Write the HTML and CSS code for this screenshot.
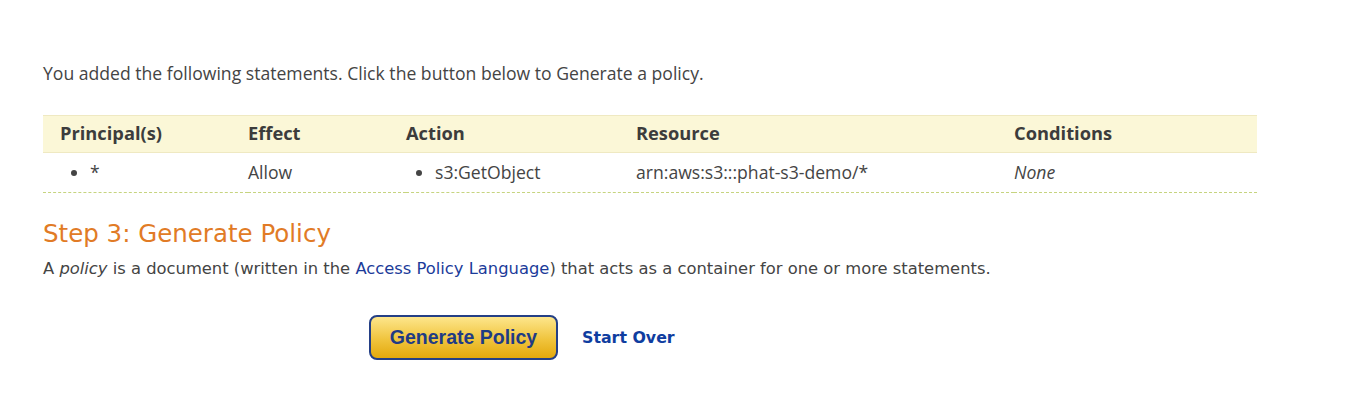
FILE: index.html
```html
<!DOCTYPE html>
<html>
<head>
<meta charset="utf-8">
<link rel="stylesheet" href="styles.css">
</head>
<body>
<div class="page">
  <p class="intro">You added the following statements. Click the button below to Generate a policy.</p>
  <table class="stmts">
    <colgroup>
      <col class="w1"><col class="w2"><col class="w3"><col class="w4"><col class="w5">
    </colgroup>
    <thead>
      <tr>
        <th class="first">Principal(s)</th>
        <th>Effect</th>
        <th>Action</th>
        <th>Resource</th>
        <th>Conditions</th>
      </tr>
    </thead>
    <tbody>
      <tr>
        <td class="first"><ul class="list l1"><li>*</li></ul></td>
        <td>Allow</td>
        <td><ul class="list l3"><li>s3:GetObject</li></ul></td>
        <td>arn:aws:s3:::phat-s3-demo/*</td>
        <td><em>None</em></td>
      </tr>
    </tbody>
  </table>
  <h2 class="step">Step 3: Generate Policy</h2>
  <p class="desc">A <em>policy</em> is a document (written in the <a href="#" class="link">Access Policy Language</a>) that acts as a container for one or more statements.</p>
  <div class="actions">
    <button class="gen-btn">Generate Policy</button>
    <a href="#" class="start-over">Start Over</a>
  </div>
</div>
</body>
</html>
```

FILE: styles.css
```css
html, body {
  margin: 0;
  padding: 0;
  background: #fff;
}
.page {
  padding: 61px 0 0 43px;
  width: 1214px;
}
.intro {
  margin: 0;
  font-family: "Open Sans", "Liberation Sans", sans-serif;
  font-size: 17.6px;
  color: #444;
  line-height: 24px;
}
.stmts {
  margin-top: 30px;
  width: 1214px;
  table-layout: fixed;
  border-collapse: collapse;
  font-family: "Open Sans", "Liberation Sans", sans-serif;
  font-size: 17.6px;
  color: #444;
}
.w1 { width: 205px; }
.w2 { width: 158px; }
.w3 { width: 230px; }
.w4 { width: 378px; }
.w5 { width: 243px; }
.stmts th {
  background: #fbf7d7;
  border-top: 1px solid #efe9c2;
  border-bottom: 1px solid #efe9c2;
  text-align: left;
  font-weight: bold;
  font-size: 18.3px;
  color: #3c3c3c;
  height: 37px;
  padding: 0 0 3px 0;
  box-sizing: border-box;
  vertical-align: middle;
}
.stmts td {
  height: 37px;
  padding: 0 0 2px 0;
  vertical-align: middle;
  border-bottom: 1px dashed #c6d47f;
}
.stmts .first { padding-left: 17px; }
.list {
  margin: 0;
  padding-left: 30px;
}
.l3 { padding-left: 29px; }
.step {
  margin: 26px 0 0 0;
  font-family: "DejaVu Sans", Verdana, sans-serif;
  font-weight: normal;
  font-size: 24.5px;
  color: #e17b26;
  line-height: 30px;
}
.desc {
  margin: 9px 0 0 0;
  font-family: "DejaVu Sans", Verdana, sans-serif;
  font-size: 16.35px;
  color: #444;
  line-height: 22px;
}
.link {
  color: #1b3b9a;
  text-decoration: none;
}
.actions {
  display: flex;
  align-items: center;
  margin: 35px 0 0 326px;
  gap: 24px;
}
.gen-btn {
  width: 189px;
  height: 45px;
  border: 2px solid #243f86;
  border-radius: 8px;
  background: linear-gradient(#fde68c, #f0c43d 55%, #e3a80c);
  font-family: "Liberation Sans", Arial, sans-serif;
  font-weight: bold;
  font-size: 19.5px;
  color: #1f3b85;
  padding: 0;
}
.start-over {
  font-family: "DejaVu Sans", Verdana, sans-serif;
  font-weight: bold;
  font-size: 15.8px;
  color: #0f3da0;
  text-decoration: none;
}
```
